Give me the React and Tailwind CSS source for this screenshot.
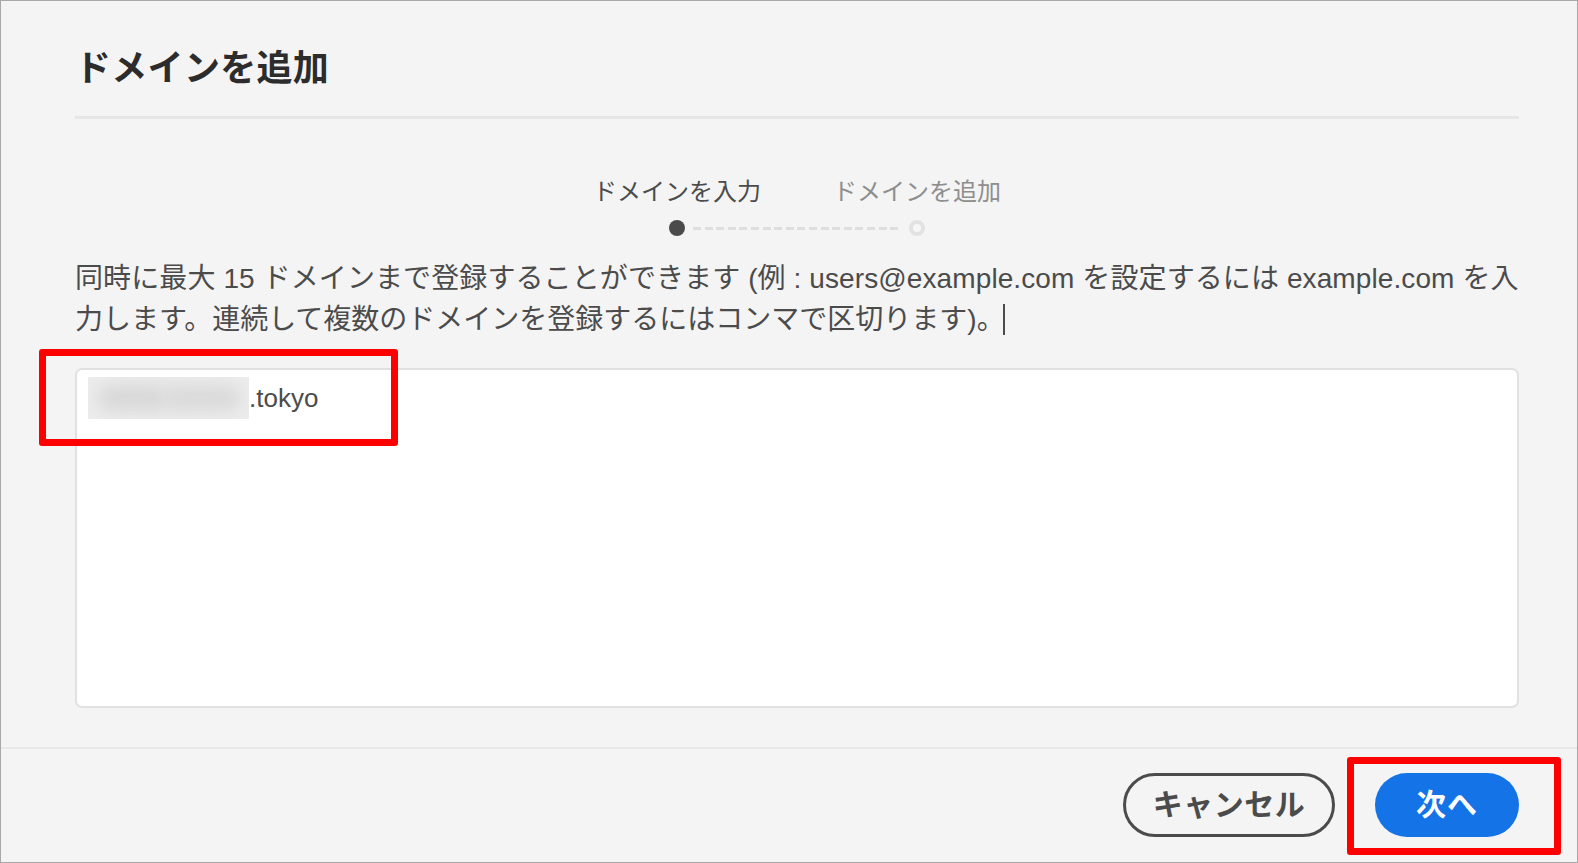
export default function App() {
  const font = { fontFamily: '"Liberation Sans", "Noto Sans CJK JP", sans-serif' };
  return (
    <div
      className="relative w-[1578px] h-[863px] border border-[#a8a8a8] bg-[#f4f4f4] flex flex-col overflow-hidden"
      style={font}
    >
      <div className="flex flex-col pl-[74px] pr-[58px] flex-1">
        <h1 className="mt-[44px] h-[48px] leading-[48px] text-[36px] font-bold text-[#2c2c2c] tracking-[0.3px]">
          ドメインを追加
        </h1>
        <div className="mt-[23px] h-[3px] bg-[#e6e6e6]" />

        {/* Stepper */}
        <div className="mt-[58px] flex flex-col items-center">
          <div className="flex">
            <div className="w-[240px] text-center text-[24px] leading-[30px] text-[#4b4b4b]">ドメインを入力</div>
            <div className="w-[240px] text-center text-[24px] leading-[30px] text-[#8e8e8e]">ドメインを追加</div>
          </div>
          <div className="mt-[13px] flex items-center">
            <div className="w-[16px] h-[16px] rounded-full bg-[#4b4b4b]" />
            <div className="ml-[8px] mr-[7px] w-[209px] h-[3px] bg-[repeating-linear-gradient(90deg,#dedede_0px,#dedede_8px,transparent_8px,transparent_11.6px)]" />
            <div className="w-[16px] h-[16px] rounded-full border-[4px] border-[#e2e2e2] bg-[#f6f6f6]" />
          </div>
        </div>

        {/* Description */}
        <div className="mt-[22px] text-[28px] leading-[41px] text-[#4b4b4b]">
          <div className="whitespace-nowrap tracking-[0.1px]">
            同時に最大 15 ドメインまで登録することができます (例 : users@example.com を設定するには example.com を入
          </div>
          <div className="whitespace-nowrap flex items-center">
            <span>力します。連続して複数のドメインを登録するにはコンマで区切ります)。</span>
            <span className="ml-[-2px] inline-block w-[2px] h-[31px] bg-[#4b4b4b]" />
          </div>
        </div>

        {/* Textarea */}
        <div className="mt-[28px] h-[340px] rounded-[7px] border-2 border-[#e1e1e1] bg-white pl-[11px] pt-[7px]">
          <div className="flex items-center h-[42px] text-[26px] text-[#4b4b4b]">
            <div className="relative w-[161px] h-[42px] overflow-hidden bg-[#ececec]">
              <div className="absolute left-[10px] top-[8px] w-[70px] h-[26px] rounded-full bg-[#d8d8d8] blur-[8px]" />
              <div className="absolute left-[75px] top-[8px] w-[78px] h-[26px] rounded-full bg-[#dadada] blur-[8px]" />
            </div>
            <span className="leading-[42px]">.tokyo</span>
          </div>
        </div>
      </div>

      {/* Footer */}
      <div className="mt-[38px] h-[2px] bg-[#e8e8e8]" />
      <div className="flex justify-end items-center pr-[58px] pt-[24px] pb-[25px]">
        <button className="w-[212px] h-[64px] rounded-full border-[3px] border-[#4b4b4b] text-[30px] font-bold text-[#4b4b4b] leading-none tracking-[0.5px]">
          キャンセル
        </button>
        <button className="ml-[40px] w-[144px] h-[64px] rounded-full bg-[#1473e6] text-[30px] font-bold text-white leading-none tracking-[1px]">
          次へ
        </button>
      </div>

      {/* Annotation overlays */}
      <div className="absolute left-[38px] top-[348px] w-[359px] h-[97px] border-[7px] border-[#ff0000] rounded-[3px] pointer-events-none" />
      <div className="absolute left-[1346px] top-[756px] w-[214px] h-[98px] border-[7px] border-[#ff0000] rounded-[3px] pointer-events-none" />
    </div>
  );
}
